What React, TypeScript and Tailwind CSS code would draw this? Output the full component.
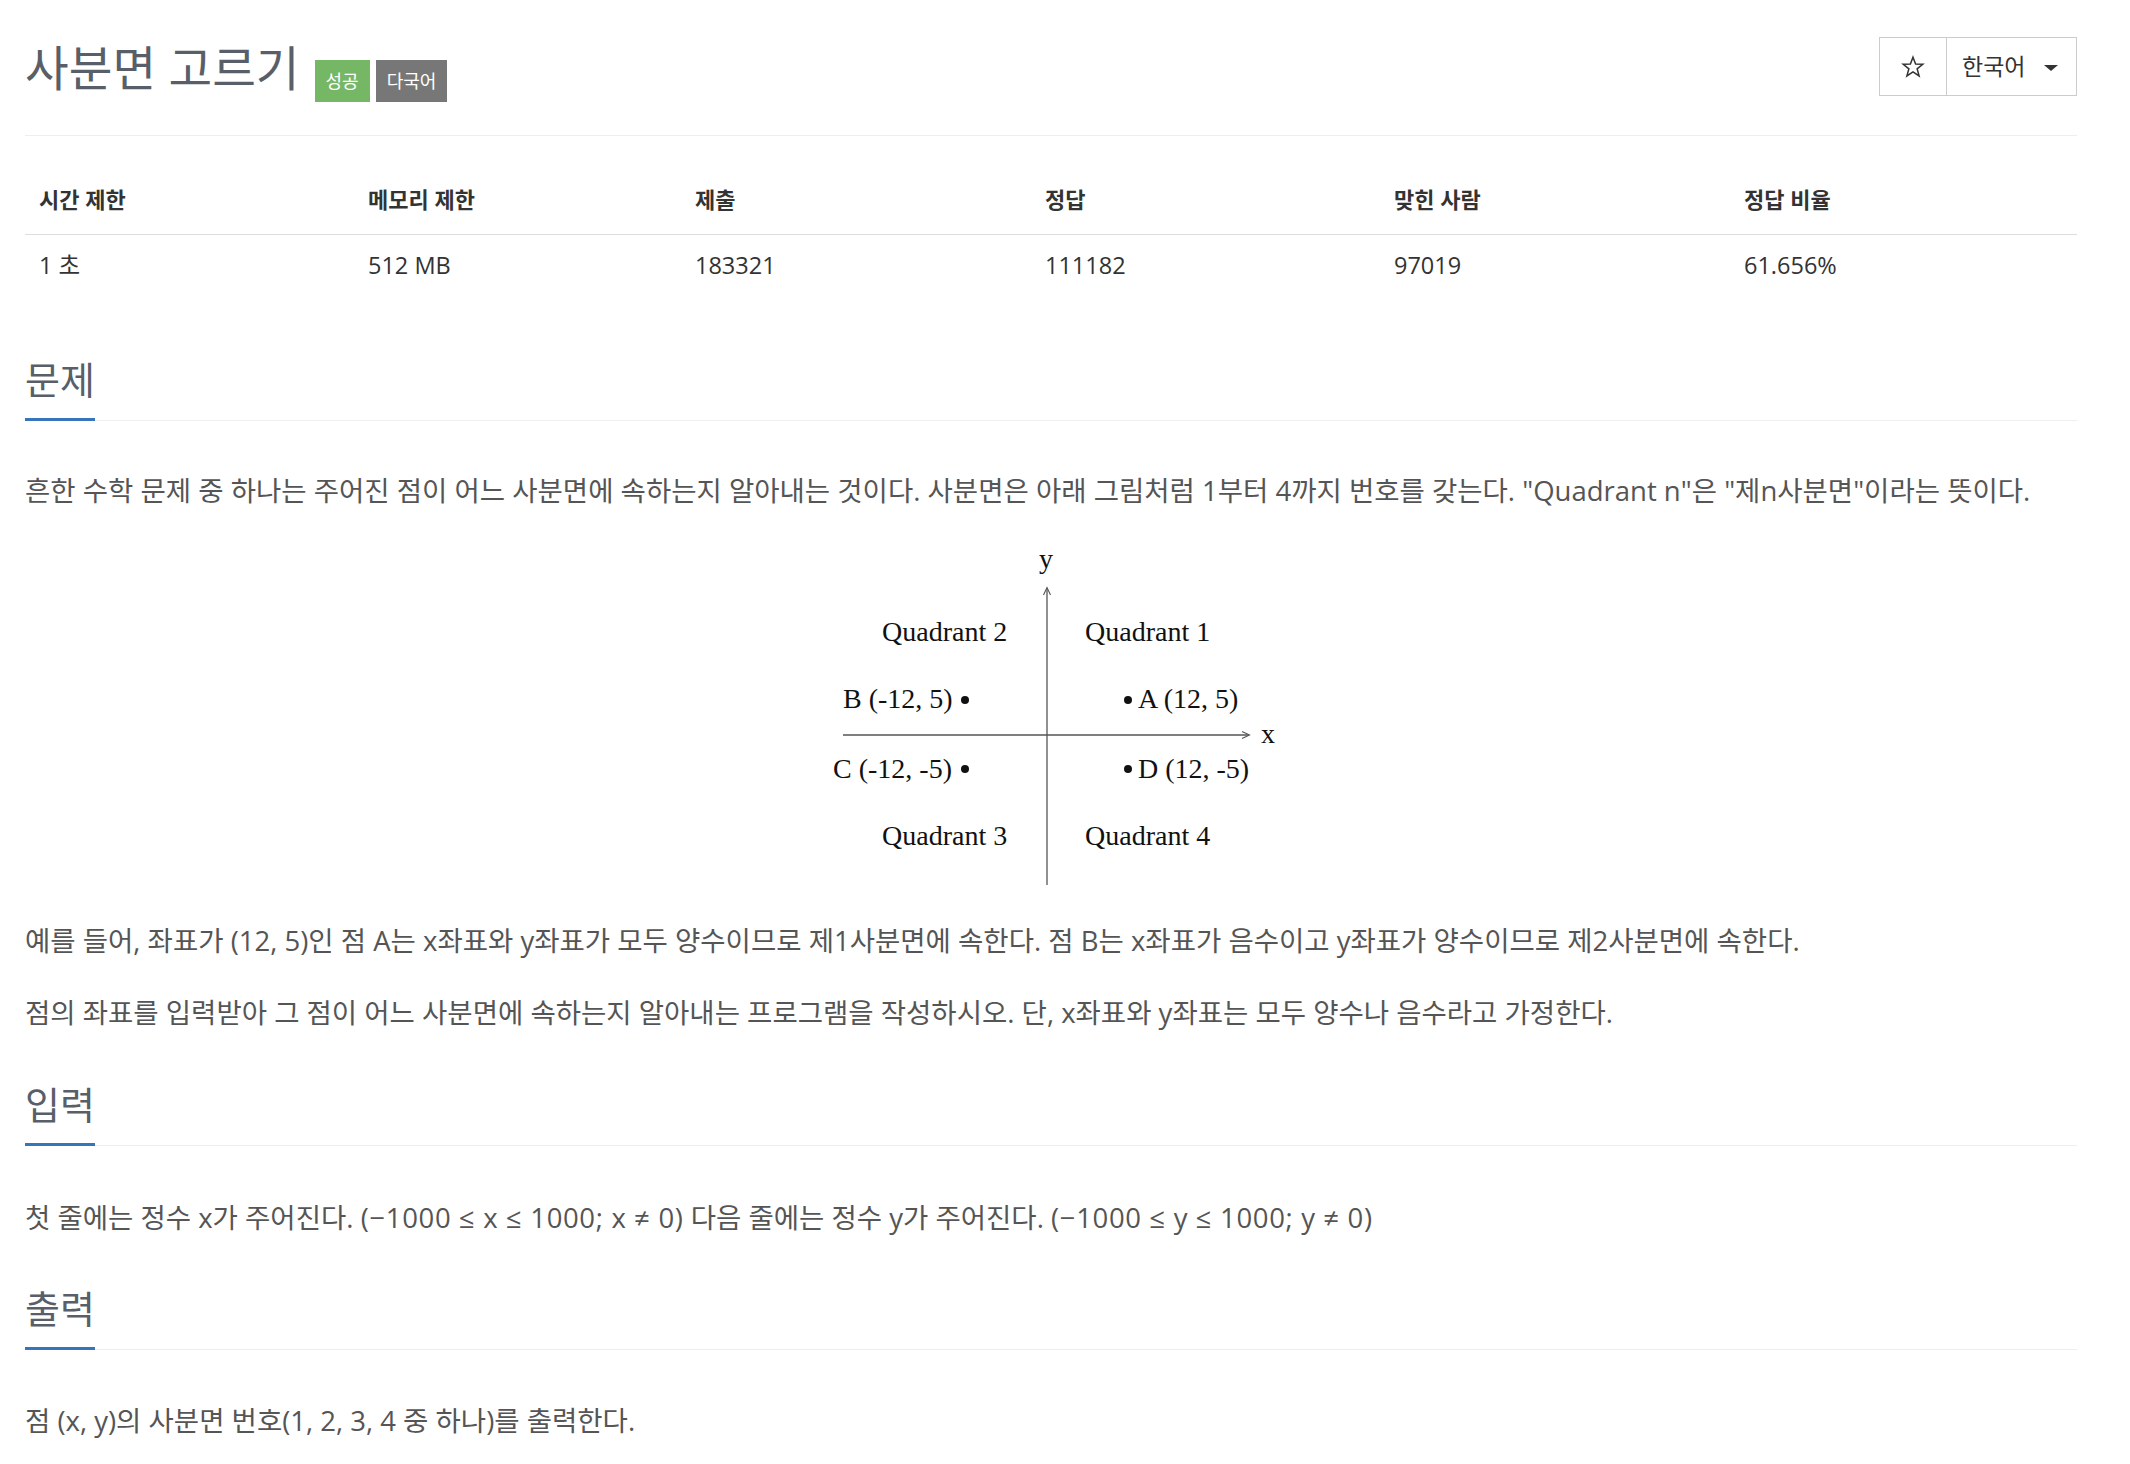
import React from "react";

const FONT = { fontFamily: '"Open Sans", "Noto Sans CJK KR", sans-serif' };

const stats = [
  { label: "시간 제한", value: "1 초" },
  { label: "메모리 제한", value: "512 MB" },
  { label: "제출", value: "183321" },
  { label: "정답", value: "111182" },
  { label: "맞힌 사람", value: "97019" },
  { label: "정답 비율", value: "61.656%" },
];

const colWidths = [329, 327, 350, 349, 350, 347];

const Headline = ({ title }: { title: string }) => (
  <div className="flex border-b border-[#eee]">
    <h2 className="text-[38px] leading-[44px] font-normal text-[#595f69] pb-[17px] border-b-[3px] border-[#3774ba] -mb-px">
      {title}
    </h2>
  </div>
);

const Diagram = () => (
  <svg
    width="470"
    height="360"
    viewBox="0 0 470 360"
    className="block mx-auto mt-[33px]"
    style={{ fontFamily: '"Liberation Serif", "Times New Roman", serif' }}
  >
    {/* axes */}
    <line x1="231" y1="46" x2="231" y2="343" stroke="#555" strokeWidth="1.3" />
    <path d="M227.5 53 L231 45.5 L234.5 53" fill="none" stroke="#555" strokeWidth="1.1" />
    <line x1="27" y1="193" x2="433" y2="193" stroke="#555" strokeWidth="1.3" />
    <path d="M426 189.5 L433.5 193 L426 196.5" fill="none" stroke="#555" strokeWidth="1.1" />
    <g fontSize="28" fill="#111">
      <text x="230" y="26" textAnchor="middle">y</text>
      <text x="445" y="201">x</text>
      <text x="66" y="99">Quadrant 2</text>
      <text x="269" y="99">Quadrant 1</text>
      <text x="27" y="166">B (-12, 5)</text>
      <text x="322" y="166">A (12, 5)</text>
      <text x="17" y="236">C (-12, -5)</text>
      <text x="322" y="236">D (12, -5)</text>
      <text x="66" y="303">Quadrant 3</text>
      <text x="269" y="303">Quadrant 4</text>
    </g>
    <circle cx="149" cy="158" r="4" fill="#111" />
    <circle cx="312" cy="158" r="4" fill="#111" />
    <circle cx="149" cy="227" r="4" fill="#111" />
    <circle cx="312" cy="227" r="4" fill="#111" />
  </svg>
);

export default function App() {
  return (
    <div className="bg-white min-h-screen" style={FONT}>
      <div className="ml-[25px] w-[2052px] pb-[30px]">
        {/* header */}
        <div className="flex items-start justify-between pt-[37px] pb-[33px] border-b border-[#eee]">
          <div className="flex items-start mt-[4px]">
            <h1 className="text-[47.5px] leading-[54px] font-normal text-[#595f69]">
              사분면 고르기
            </h1>
            <span className="ml-[15px] mt-[19px] h-[42px] px-[11px] flex items-center bg-[#76b766] text-white text-[18px]">
              성공
            </span>
            <span className="ml-[6px] mt-[19px] h-[42px] px-[11px] flex items-center bg-[#777] text-white text-[18px]">
              다국어
            </span>
          </div>
          <div className="flex h-[59px] border border-[#ccc]">
            <div className="w-[67px] flex items-center justify-center border-r border-[#ccc]">
              <svg width="24" height="24" viewBox="0 0 24 24">
                <path
                  d="M12 2.2 L14.6 9.1 L21.8 9.3 L16.1 13.8 L18.1 20.9 L12 16.8 L5.9 20.9 L7.9 13.8 L2.2 9.3 L9.4 9.1 Z"
                  fill="none"
                  stroke="#333"
                  strokeWidth="1.5"
                  strokeLinejoin="miter"
                />
              </svg>
            </div>
            <div className="w-[129px] flex items-center pl-[15px]">
              <span className="text-[23px] text-[#333]">한국어</span>
              <span className="ml-[19px] mt-[2px] w-0 h-0 border-l-[7px] border-r-[7px] border-t-[6px] border-l-transparent border-r-transparent border-t-[#333]" />
            </div>
          </div>
        </div>

        {/* stats table */}
        <table className="mt-[30px] w-full table-fixed border-collapse">
          <colgroup>
            {colWidths.map((w, i) => (
              <col key={i} style={{ width: w }} />
            ))}
          </colgroup>
          <thead>
            <tr className="border-b border-[#ddd]">
              {stats.map((s) => (
                <th
                  key={s.label}
                  className="h-[68px] pl-[14px] text-left align-middle text-[22px] font-bold text-[#333]"
                >
                  {s.label}
                </th>
              ))}
            </tr>
          </thead>
          <tbody>
            <tr>
              {stats.map((s) => (
                <td key={s.label} className="h-[62px] pl-[14px] align-middle text-[23.5px] text-[#333]">
                  {s.value}
                </td>
              ))}
            </tr>
          </tbody>
        </table>

        {/* 문제 */}
        <section className="mt-[61px]">
          <Headline title="문제" />
          <div className="text-[27.5px] leading-[36px] text-[#555]">
            <p className="mt-[52px]">
              흔한 수학 문제 중 하나는 주어진 점이 어느 사분면에 속하는지 알아내는 것이다. 사분면은 아래 그림처럼 1부터 4까지 번호를 갖는다. "Quadrant n"은 "제n사분면"이라는 뜻이다.
            </p>
            <Diagram />
            <p className="mt-[21px]">
              예를 들어, 좌표가 (12, 5)인 점 A는 x좌표와 y좌표가 모두 양수이므로 제1사분면에 속한다. 점 B는 x좌표가 음수이고 y좌표가 양수이므로 제2사분면에 속한다.
            </p>
            <p className="mt-[36px]">
              점의 좌표를 입력받아 그 점이 어느 사분면에 속하는지 알아내는 프로그램을 작성하시오. 단, x좌표와 y좌표는 모두 양수나 음수라고 가정한다.
            </p>
          </div>
        </section>

        {/* 입력 */}
        <section className="mt-[51px]">
          <Headline title="입력" />
          <p className="mt-[54px] text-[27.5px] leading-[36px] text-[#555]">
            첫 줄에는 정수 x가 주어진다.{" "}
            <span className="tracking-[0.65px]">(−1000 ≤ x ≤ 1000; x ≠ 0)</span> 다음 줄에는 정수 y가 주어진다.{" "}
            <span className="tracking-[0.65px]">(−1000 ≤ y ≤ 1000; y ≠ 0)</span>
          </p>
        </section>

        {/* 출력 */}
        <section className="mt-[50px]">
          <Headline title="출력" />
          <p className="mt-[53px] text-[27.5px] leading-[36px] text-[#555]">
            점 (x, y)의 사분면 번호(1, 2, 3, 4 중 하나)를 출력한다.
          </p>
        </section>
      </div>
    </div>
  );
}
